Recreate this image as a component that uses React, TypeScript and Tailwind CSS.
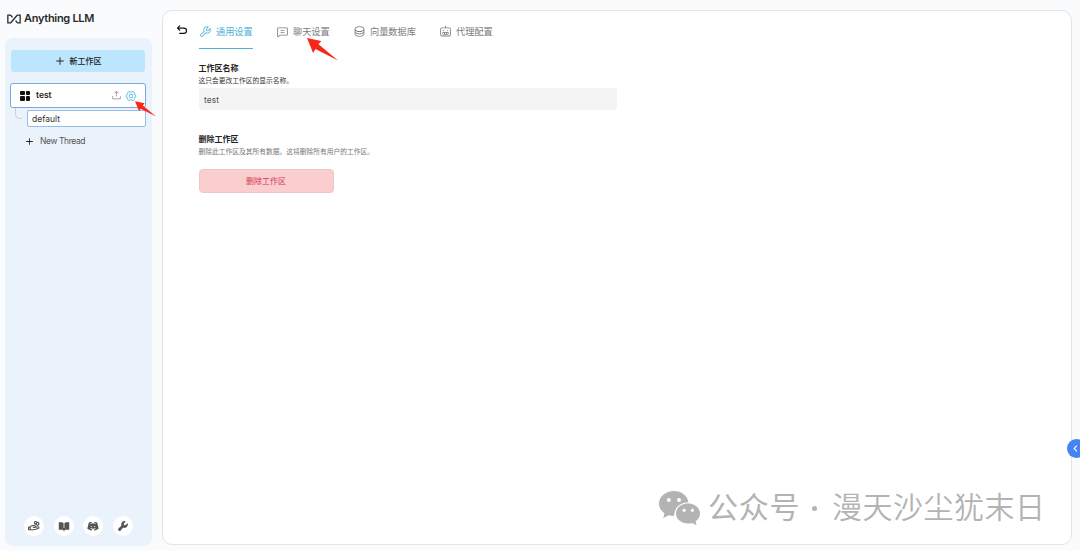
import {
  PiArrowUUpLeftBold,
  PiBookOpenFill,
  PiChatText,
  PiDatabase,
  PiDiscordLogoFill,
  PiGearSix,
  PiHandCoinsBold,
  PiPlusBold,
  PiRobot,
  PiUploadSimple,
  PiWrench,
  PiWrenchFill
} from "react-icons/pi";

const tabs = [
  { label: "通用设置", icon: PiWrench, className: "w-[54px] text-[#4fb3d6]", active: true },
  { label: "聊天设置", icon: PiChatText, className: "ml-[23px] w-[54px] text-[#7c7c7c]" },
  { label: "向量数据库", icon: PiDatabase, className: "ml-[23px] w-[63px] text-[#7c7c7c]" },
  { label: "代理配置", icon: PiRobot, className: "ml-[23px] w-[54px] text-[#7c7c7c]" }
];

const footerIcons = [PiHandCoinsBold, PiBookOpenFill, PiDiscordLogoFill, PiWrenchFill];

function Logo() {
  return (
    <div className="flex h-[17px] items-center gap-[3px] pl-[7px]">
      <svg viewBox="0 0 15 10" className="h-[10px] w-[14px]" fill="none" stroke="#2a2a2a" strokeWidth="1.4">
        <path d="M5.900 3.300 4.600 1.600Q4 .8 3.200.8H.9v8.400h2.300q.8 0 1.300-.7l5.900-7q.5-.7 1.300-.7h2.400v8.400h-2.300q-.8 0-1.300-.8L9.200 6.800" />
      </svg>
      <span className="whitespace-nowrap text-[11px] font-semibold leading-none tracking-[-0.3px] text-[#2a2a2a]">
        Anything LLM
      </span>
    </div>
  );
}

function Arrow({ className }: { className: string }) {
  return (
    <svg viewBox="0 0 31 23" className={className} fill="#fb2618">
      <path d="M0 0 14.3 3 11.5 6.2 31 22.5 8.5 11 6.1 15Z" />
    </svg>
  );
}

function Sidebar() {
  return (
    <aside className="flex w-[162px] shrink-0 flex-col pt-[10px]">
      <Logo />
      <div className="ml-[5px] mt-[11px] flex h-[508px] w-[147px] flex-col rounded-lg bg-[#eaf2fb] pl-[6px] pr-[6px] pt-[12px]">
        <button className="flex h-[22px] w-[134px] shrink-0 items-center justify-center gap-[5px] rounded-[3px] bg-[#bce5fe] text-[8px] font-medium text-[#222]">
          <PiPlusBold className="h-[10px] w-[10px]" />
          新工作区
        </button>

        <div className="relative -ml-px mt-[11px] flex h-[25px] w-[136px] shrink-0 items-center rounded-[3px] border border-[#77a9e4] bg-white pl-[9px] pr-[8px]">
          <div className="grid h-[10px] w-[10px] grid-cols-2 gap-px">
            {[0, 1, 2, 3].map((i) => (
              <span key={i} className="rounded-[1px] bg-[#111]" />
            ))}
          </div>
          <span className="ml-[6px] flex-1 text-[8.5px] font-semibold text-[#222]">test</span>
          <PiUploadSimple className="h-[11px] w-[11px] text-[#888]" />
          <PiGearSix className="ml-[3px] h-[12px] w-[12px] text-[#43b4e3]" />
          <Arrow className="absolute left-[124px] top-[16px] h-[18px] w-[21px]" />
        </div>

        <div className="flex">
          <div className="ml-[4px] h-[11px] w-[7px] rounded-bl-[5px] border-b border-l border-[#cbd1d8]" />
          <div className="ml-[5px] mt-[2px] flex h-[17px] w-[119px] shrink-0 items-center rounded-[2px] border border-[#94bde8] bg-white pl-[4px] pt-px text-[8.5px] text-[#333]">
            default
          </div>
        </div>

        <div className="mt-[8px] flex h-[12px] items-center pl-[14px] text-[8.5px] text-[#555]">
          <PiPlusBold className="h-[9px] w-[9px] text-[#222]" />
          <span className="ml-[6px] tracking-[-0.4px]">New Thread</span>
        </div>

        <div className="mb-[10px] ml-[13px] mt-auto flex gap-[9.5px]">
          {footerIcons.map((Icon, idx) => (
            <button
              key={idx}
              className="flex h-[20px] w-[20px] items-center justify-center rounded-full bg-white text-[#555]"
            >
              <Icon className="h-[12px] w-[12px]" />
            </button>
          ))}
        </div>
      </div>
    </aside>
  );
}

function Watermark() {
  return (
    <div className="absolute left-[496px] top-[477px] flex h-[40px] items-center whitespace-nowrap font-['Noto_Sans_CJK_SC',sans-serif] text-[#b3b3b3]">
      <svg viewBox="0 0 42 34" className="h-[34px] w-[42px]" fill="#b3b3b3">
        <path d="M15 0C6.500 0 0 5.700 0 12.700c0 4 2.200 7.300 5.400 9.500L4.300 27l5.400-2.800c1.700.5 3.600.7 5.500.7C15 17 21 11.200 29.500 11.200 28.500 4.800 22.500 0 15 0Z" />
        <path d="M29 12.600c-6.700 0-12 4.400-12 10s5.300 10 12 10c1.500 0 2.800-.2 4.100-.6l4.400 2.200-.9-3.900C39.300 28.500 41 25.700 41 22.600c0-5.600-5.300-10-12-10Z" />
        <g fill="white">
          <circle cx="9.800" cy="9" r="2" />
          <circle cx="20" cy="9" r="2" />
          <circle cx="25.200" cy="19.300" r="1.600" />
          <circle cx="33.400" cy="19.300" r="1.600" />
        </g>
      </svg>
      <span className="mb-[6px] ml-[7px] w-[94px] text-[30px] font-normal leading-none tracking-[0.8px]">公众号</span>
      <span className="ml-[10px] h-[5px] w-[5px] rounded-full bg-[#b3b3b3]" />
      <span className="mb-[6px] ml-[15px] text-[30px] font-[350] leading-none tracking-[0.5px]">漫天沙尘犹末日</span>
    </div>
  );
}

export default function App() {
  return (
    <div className="relative flex h-[551px] w-[1080px] overflow-hidden bg-[#f9fbfd] font-['Inter','Noto_Sans_CJK_SC',sans-serif]">
      <Sidebar />
      <main className="relative mt-[10px] h-[535px] w-[910px] rounded-[10px] border border-[#e2e4e6] bg-white">
        <div className="flex h-[38px] items-end pl-[13px]">
          <PiArrowUUpLeftBold className="mb-[13px] h-[12px] w-[12px] text-[#111]" />
          <nav className="ml-[11px] flex">
            {tabs.map(({ label, icon: Icon, className, active }) => (
              <div
                key={label}
                className={`flex h-[29px] shrink-0 items-center gap-[4px] whitespace-nowrap border-b-[1.5px] pb-[4px] text-[9.200px] ${className} ${
                  active ? "border-[#4fb3d6]" : "border-transparent"
                }`}
              >
                <Icon className="mb-[2px] h-[13px] w-[13px] shrink-0" />
                {label}
              </div>
            ))}
          </nav>
        </div>
        <Arrow className="absolute left-[144px] top-[27px] h-[23px] w-[31px]" />

        <section className="mt-[12px] pl-[35.5px]">
          <h2 className="h-[14px] text-[8px] font-bold leading-[14px] text-[#222]">工作区名称</h2>
          <p className="h-[12px] text-[6.750px] leading-[11px] text-[#333]">这只会更改工作区的显示名称。</p>
          <div className="mt-px flex h-[22px] w-[418px] items-center rounded-[3px] bg-[#f4f4f4] pl-[5.5px] pt-[2px] text-[8.500px] text-[#555]">
            test
          </div>
        </section>

        <section className="mt-[22px] pl-[35.5px]">
          <h2 className="h-[14px] text-[8px] font-bold leading-[14px] text-[#222]">删除工作区</h2>
          <p className="h-[12px] text-[6.750px] leading-[11px] text-[#777]">
            删除此工作区及其所有数据。这将删除所有用户的工作区。
          </p>
          <button className="mt-[11px] flex h-[24px] w-[135px] items-center justify-center rounded-[4px] border border-[#f3c4c7] bg-[#facdcf] text-[8px] text-[#d93850]">
            删除工作区
          </button>
        </section>
        <Watermark />
      </main>

      <button className="absolute left-[1067px] top-[439px] flex h-[19px] w-[19px] items-center rounded-full bg-[#4584f3] pl-[6px]">
        <svg viewBox="0 0 5 8" className="h-[7px] w-[5px]" fill="none" stroke="white" strokeWidth="1.3">
          <path d="M4 .8 1 4l3 3.200" />
        </svg>
      </button>
    </div>
  );
}
